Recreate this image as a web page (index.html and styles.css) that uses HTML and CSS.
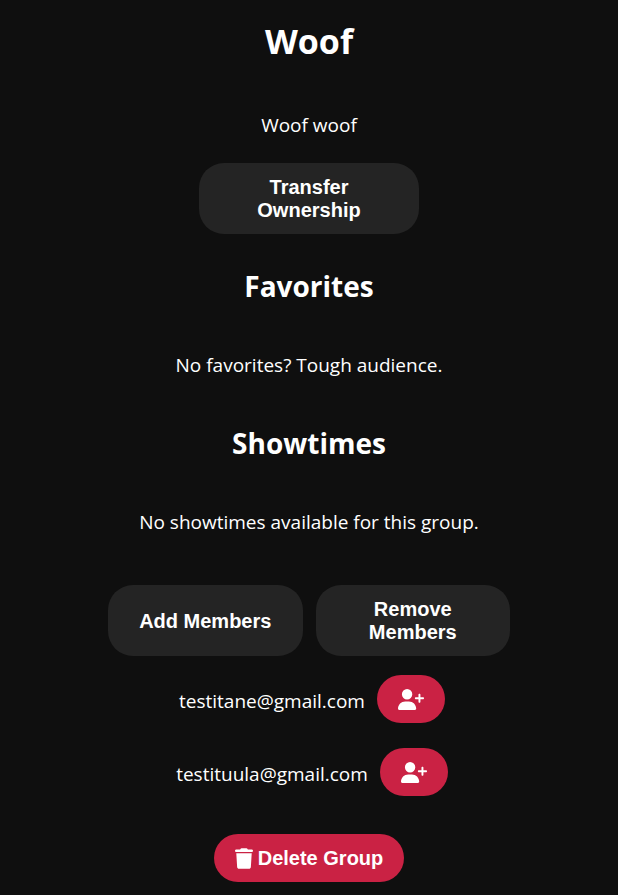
FILE: index.html
```html
<!DOCTYPE html>
<html lang="en">
<head>
<meta charset="utf-8">
<meta name="viewport" content="width=device-width, initial-scale=1">
<title>Woof</title>
<link rel="stylesheet" href="styles.css">
</head>
<body>
<svg class="sprite" aria-hidden="true">
  <symbol id="user-plus" viewBox="0 0 640 512"><path d="M96 128a128 128 0 1 1 256 0A128 128 0 1 1 96 128zM0 482.3C0 383.8 79.8 304 178.3 304h91.4C368.2 304 448 383.8 448 482.3c0 16.4-13.3 29.7-29.7 29.7H29.7C13.3 512 0 498.7 0 482.3zM504 312V248H440c-13.3 0-24-10.7-24-24s10.7-24 24-24h64V136c0-13.3 10.7-24 24-24s24 10.7 24 24v64h64c13.3 0 24 10.7 24 24s-10.7 24-24 24H552v64c0 13.3-10.7 24-24 24s-24-10.7-24-24z"/></symbol>
  <symbol id="trash" viewBox="0 0 448 512"><path d="M135.2 17.7L128 32H32C14.3 32 0 46.3 0 64S14.3 96 32 96H416c17.7 0 32-14.3 32-32s-14.3-32-32-32H320l-7.2-14.3C307.4 6.8 296.3 0 284.2 0H163.8c-12.1 0-23.2 6.8-28.6 17.7zM416 128H32L53.2 467c1.6 25.3 22.6 45 47.9 45H346.9c25.3 0 46.3-19.7 47.9-45L416 128z"/></symbol>
</svg>
<main class="group">
  <h1 class="title">Woof</h1>
  <p class="text">Woof woof</p>
  <button class="button button-large button-transfer" type="button">Transfer Ownership</button>
  <h2 class="heading">Favorites</h2>
  <p class="text">No favorites? Tough audience.</p>
  <h2 class="heading heading-showtimes">Showtimes</h2>
  <p class="text">No showtimes available for this group.</p>
  <div class="actions">
    <button class="button button-large" type="button">Add Members</button>
    <button class="button button-large" type="button">Remove Members</button>
  </div>
  <ul class="members">
    <li class="member">
      <span class="email">testitane@gmail.com</span>
      <button class="button button-accent" type="button" aria-label="Add testitane@gmail.com"><svg class="icon-user"><use href="#user-plus"/></svg></button>
    </li>
    <li class="member">
      <span class="email">testituula@gmail.com</span>
      <button class="button button-accent" type="button" aria-label="Add testituula@gmail.com"><svg class="icon-user"><use href="#user-plus"/></svg></button>
    </li>
  </ul>
  <button class="button button-accent" type="button"><svg class="icon-trash" aria-hidden="true"><use href="#trash"/></svg>Delete Group</button>
</main>
</body>
</html>
```
FILE: styles.css
```css
* {
  box-sizing: border-box;
}

body {
  margin: 0;
  background: #0f0f0f;
  color: #fff;
  font-family: "Segoe UI", "Open Sans", sans-serif;
  font-size: 19px;
  line-height: 28px;
}

.sprite {
  display: none;
}

.group {
  display: flex;
  flex-direction: column;
  align-items: center;
  padding: 16px 12px 12px;
  text-align: center;
}

.title,
.heading,
.text {
  margin: 0;
}

.title {
  margin-bottom: 45px;
  font-size: 34px;
  line-height: 50px;
}

.heading {
  margin: 32px 0 45px;
  font-size: 28px;
  line-height: 40px;
}

.heading-showtimes {
  margin-top: 44px;
}

.button {
  display: flex;
  align-items: center;
  justify-content: center;
  border: 0;
  border-radius: 25px;
  padding: 12px 30px;
  background: #242424;
  color: #fff;
  font: bold 20px/23px "Liberation Sans", Arial, sans-serif;
  cursor: pointer;
}

.button-large {
  min-height: 71px;
  padding-top: 13px;
}

.button-transfer {
  width: 220px;
  margin-top: 24px;
  padding-right: 40px;
  padding-left: 40px;
}

.actions {
  display: grid;
  grid-template-columns: 1fr 1fr;
  gap: 13px;
  width: 402px;
  max-width: 100%;
  margin-top: 49px;
}

.members {
  display: grid;
  gap: 25px;
  margin: 19px 0 38px;
  padding: 0 0 0 6px;
  list-style: none;
}

.member {
  display: flex;
  align-items: center;
  justify-content: center;
  gap: 12px;
}

.email {
  padding-top: 4px;
}

.button-accent {
  gap: 5px;
  min-height: 48px;
  padding: 12px 21px;
  background: #ca2244;
}

.icon-user {
  width: 26px;
  height: 21px;
  fill: currentColor;
}

.icon-trash {
  width: 18px;
  height: 21px;
  fill: currentColor;
}
```
